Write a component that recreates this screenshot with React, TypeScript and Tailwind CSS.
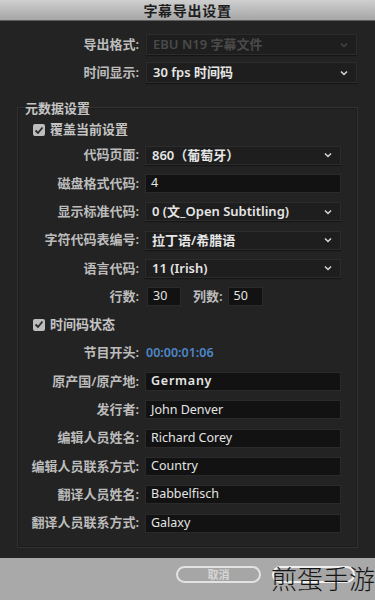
import React from 'react';

const FONT = { fontFamily: '"Noto Sans", "Noto Sans CJK SC", sans-serif' };

const Chevron: React.FC = () => (
  <svg width="8" height="6" viewBox="0 0 8 6" className="shrink-0">
    <path d="M1 1.5 L4 4.5 L7 1.5" fill="none" stroke="#d8d8d8" strokeWidth="1.5" />
  </svg>
);

const Check: React.FC<{ label: string }> = ({ label }) => (
  <div className="flex items-center gap-[5px] h-[18px]">
    <div className="w-[12px] h-[12px] rounded-[2px] bg-[#bdbdbd] flex items-center justify-center">
      <svg width="10" height="9" viewBox="0 0 10 9">
        <path d="M1.5 4.5 L4 7 L8.5 1.5" fill="none" stroke="#2a2a2a" strokeWidth="1.8" />
      </svg>
    </div>
    <span className="text-[13px] font-semibold text-[#c4c4c4]">{label}</span>
  </div>
);

const Select: React.FC<{ value: string; disabled?: boolean; h?: string }> = ({ value, disabled, h = 'h-[19px]' }) => (
  <div
    className={`flex-1 ${h} flex items-center justify-between pl-[6px] pr-[8px] border border-[#2c2c2c] bg-[#1e1e1e] shadow-[0_1px_1px_rgba(0,0,0,0.4)]`}
  >
    <span className={`text-[13px] font-semibold leading-none ${disabled ? 'text-[#4a4a4a]' : 'text-[#e6e6e6]'}`}>{value}</span>
    {disabled ? (
      <svg width="8" height="6" viewBox="0 0 8 6">
        <path d="M1 1.5 L4 4.5 L7 1.5" fill="none" stroke="#444" strokeWidth="1.5" />
      </svg>
    ) : (
      <Chevron />
    )}
  </div>
);

const Input: React.FC<{ value: string; className?: string; wide?: boolean }> = ({ value, className = 'flex-1', wide }) => (
  <div className={`${className} h-[19px] flex items-center pl-[5px] border border-[#2a2a2a] bg-[#121212]`}>
    <span className={`text-[12.5px] leading-none text-[#e4e4e4] ${wide ? 'tracking-[0.06em] font-semibold' : ''}`}>{value}</span>
  </div>
);

const Row: React.FC<{ label: string; children: React.ReactNode }> = ({ label, children }) => (
  <div className="flex items-center h-[28.3px]">
    <div className="w-[121px] text-right text-[13px] text-[#bcbcbc] font-semibold whitespace-nowrap">{label}</div>
    <div className="w-[196px] ml-[6px] flex items-center">{children}</div>
  </div>
);

export default function App() {
  return (
    <div className="w-[375px] h-[600px] overflow-hidden flex flex-col bg-[#232323]" style={FONT}>
      {/* title bar */}
      <div className="h-[21px] shrink-0 flex items-center justify-center bg-gradient-to-b from-[#cfcfcf] to-[#a6a6a6] border-b border-[#5e5e5e]">
        <span className="text-[14px] font-bold text-[#1e1e1e] tracking-[0.05em]">字幕导出设置</span>
      </div>

      {/* body */}
      <div className="flex-1 flex flex-col pt-[13px]">
        <div className="flex items-center h-[21px]">
          <div className="w-[139px] text-right text-[13px] text-[#bcbcbc] font-semibold">导出格式:</div>
          <div className="w-[211px] ml-[7px] flex">
            <Select value="EBU N19 字幕文件" disabled h="h-[21px]" />
          </div>
        </div>
        <div className="flex items-center h-[21px] mt-[7px]">
          <div className="w-[139px] text-right text-[13px] text-[#bcbcbc] font-semibold">时间显示:</div>
          <div className="w-[211px] ml-[7px] flex">
            <Select value="30 fps 时间码" h="h-[21px]" />
          </div>
        </div>

        {/* metadata group */}
        <div className="ml-[17px] w-[341px] mt-[24px] border border-[#313131] pb-[10px] shadow-[inset_0_0_0_1px_#1c1c1c]">
          <div className="-mt-[8px] pl-[7px] text-[13px] font-semibold text-[#c4c4c4] leading-[16px]">元数据设置</div>
          <div className="pl-[15px] mt-[5px]">
            <Check label="覆盖当前设置" />
          </div>
          <div className="mt-[2px]">
            <Row label="代码页面:"><Select value="860（葡萄牙）" /></Row>
            <Row label="磁盘格式代码:"><Input value="4" /></Row>
            <Row label="显示标准代码:"><Select value="0 (文_Open Subtitling)" /></Row>
            <Row label="字符代码表编号:"><Select value="拉丁语/希腊语" /></Row>
            <Row label="语言代码:"><Select value="11 (Irish)" /></Row>
            <div className="flex items-center h-[28.3px]">
              <div className="w-[121px] text-right text-[13px] text-[#bcbcbc] font-semibold">行数:</div>
              <Input value="30" className="w-[34px] ml-[8px]" />
              <div className="ml-[12px] text-[13px] text-[#bcbcbc] font-semibold">列数:</div>
              <Input value="50" className="w-[35px] ml-[5px]" />
            </div>
            <div className="h-[28.3px] flex items-center pl-[15px]">
              <Check label="时间码状态" />
            </div>
            <Row label="节目开头:">
              <span className="pl-[1px] text-[12.5px] font-semibold text-[#4e86c8]">00:00:01:06</span>
            </Row>
            <Row label="原产国/原产地:"><Input value="Germany" wide /></Row>
            <Row label="发行者:"><Input value="John Denver" /></Row>
            <Row label="编辑人员姓名:"><Input value="Richard Corey" /></Row>
            <Row label="编辑人员联系方式:"><Input value="Country" /></Row>
            <Row label="翻译人员姓名:"><Input value="Babbelfisch" /></Row>
            <Row label="翻译人员联系方式:"><Input value="Galaxy" /></Row>
          </div>
        </div>
      </div>

      {/* footer */}
      <div className="relative h-[42px] shrink-0 bg-[#a9a9a9] flex items-start pt-[8px]">
        <div className="ml-[176px] w-[85px] h-[17px] rounded-full border-2 border-[#e2e2e2] bg-[#a6a6a6] flex items-center justify-center">
          <span className="text-[11px] font-semibold text-[#d6d6d6] leading-none">取消</span>
        </div>
        <div className="ml-[11px] w-[83px] h-[17px] rounded-full border-2 border-[#f0f0f0] bg-[#a6a6a6]" />
        <div
          className="absolute right-[0px] top-[3px] text-[26px] leading-[34px] font-light text-[#151515] whitespace-nowrap"
          style={{ fontFamily: '"Noto Sans CJK SC", sans-serif' }}
        >
          煎蛋手游
        </div>
      </div>
    </div>
  );
}
